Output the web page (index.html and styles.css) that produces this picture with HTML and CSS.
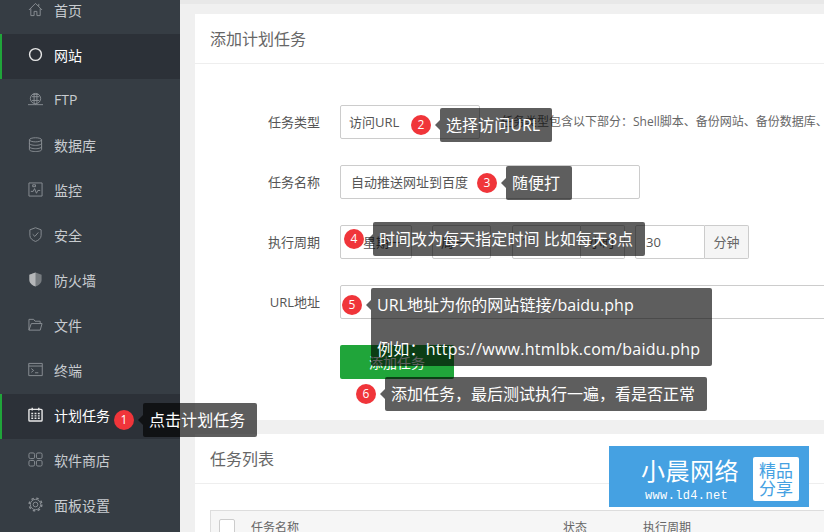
FILE: index.html
```html
<!DOCTYPE html>
<html lang="zh-CN">
<head>
    <meta charset="UTF-8">
    <meta name="viewport" content="width=device-width, initial-scale=1.0">
    <title>计划任务</title>
    <link rel="stylesheet" href="styles.css">
</head>
<body>
    <div class="page">
        <div class="sidebar">
            <ul class="menu">
                <li><svg viewBox="0 0 16 16"><path d="M1 8.500 8 1.500l7 7M3 7v7.500h3.500V10h3v4.500H13V7M11.500 2v2.500"/></svg>首页</li>
                <li class="active"><svg viewBox="0 0 16 16"><circle class="bold" cx="8" cy="8" r="6.300"/></svg>网站</li>
                <li><svg viewBox="0 0 16 16"><circle cx="8" cy="7" r="5.500"/><path d="M5 2.500h6M4 5h8M4 9h8M6.500 2v10M9.500 2v10M0 13.500h16M8 12.500v1"/></svg>FTP</li>
                <li><svg viewBox="0 0 16 16"><ellipse cx="8" cy="3" rx="6.500" ry="2.200"/><path d="M1.500 3v10.500c0 1.200 2.900 2 6.500 2s6.500-.8 6.500-2V3M1.500 6.700c0 1.200 2.900 2.200 6.500 2.200s6.500-1 6.500-2.200M1.500 10.300c0 1.200 2.900 2.200 6.500 2.200s6.500-1 6.500-2.200"/></svg>数据库</li>
                <li><svg viewBox="0 0 16 16"><path d="M1 1h14v14H1zM3 10h2.500l1.500-3 2 5 1.500-3H13M5 3h3v2H5z"/></svg>监控</li>
                <li><svg viewBox="0 0 16 16"><path d="M8 .8 14 3v6c0 3.200-3 5.400-6 6.400C5 14.400 2 12.200 2 9V3zM5 7.800 7.300 10 11 5.800"/></svg>安全</li>
                <li><svg viewBox="0 0 16 16"><path class="solid" d="M8 .5 14.500 3v5.500c0 3.300-3 5.700-6.500 7-3.500-1.300-6.500-3.700-6.500-7V3z"/><path class="shade" d="M8 .5v15c-3.500-1.300-6.500-3.700-6.500-7V3z"/></svg>防火墙</li>
                <li><svg viewBox="0 0 16 16"><path d="M1 14V2.500h5l1.500 2H13V7M1 14h12l2-7H3.500z"/></svg>文件</li>
                <li><svg viewBox="0 0 16 16"><path d="M.8 1.500h14.400v13H.8zM.8 4.300h14.400M3.500 7 6 9l-2.500 2M7.500 11.500H11"/></svg>终端</li>
                <li class="active"><svg viewBox="0 0 16 16"><path class="bold" d="M2 2.500h12a1 1 0 0 1 1 1V14a1 1 0 0 1-1 1H2a1 1 0 0 1-1-1V3.500a1 1 0 0 1 1-1zM4.500.8v3M11.500.8v3"/><path class="bold" d="M3.500 7h2M7 7h2M10.500 7h2M3.500 9.500h2M7 9.500h2M10.500 9.500h2M3.500 12h2M7 12h2M10.500 12h2"/></svg>计划任务</li>
                <li><svg viewBox="0 0 16 16"><rect x="1" y="1" width="6" height="6" rx="1.500"/><rect x="9" y="1" width="6" height="6" rx="1.500"/><rect x="1" y="9" width="6" height="6" rx="1.500"/><rect x="9" y="9" width="6" height="6" rx="1.500"/></svg>软件商店</li>
                <li><svg viewBox="0 0 16 16"><circle cx="8" cy="8" r="2.500"/><circle cx="8" cy="8" r="5.500"/><circle class="teeth" cx="8" cy="8" r="6.800"/></svg>面板设置</li>
            </ul>
        </div>

        <div class="main">
            <div class="card">
                <div class="card-title">添加计划任务</div>
                <div class="form">
                    <div class="row">
                        <label>任务类型</label>
                        <div class="box type-box">访问URL</div>
                        <span class="helper">任务类型包含以下部分：Shell脚本、备份网站、备份数据库、日志切割</span>
                    </div>
                    <div class="row">
                        <label>任务名称</label>
                        <div class="box name-box">自动推送网址到百度</div>
                    </div>
                    <div class="row">
                        <label>执行周期</label>
                        <div class="box week-box">星期一</div>
                        <div class="box day-box">周一</div>
                        <div class="group">
                            <div class="box hour-box">1</div>
                            <div class="box unit-box">小时</div>
                        </div>
                        <div class="group">
                            <div class="box min-box">30</div>
                            <div class="box addon">分钟</div>
                        </div>
                    </div>
                    <div class="row">
                        <label>URL地址</label>
                        <div class="box url-box"></div>
                    </div>
                    <div class="row">
                        <label></label>
                        <button class="btn">添加任务</button>
                    </div>
                </div>
            </div>

            <div class="card">
                <div class="card-title">任务列表</div>
                <div class="table-wrap">
                    <div class="table-head">
                        <span class="check"></span>
                        <span class="col-name">任务名称</span>
                        <span class="col-state">状态</span>
                        <span>执行周期</span>
                    </div>
                </div>
            </div>
        </div>
    </div>

    <!-- 教程标注 -->
    <div class="mark mark-1"><span class="num">1</span><div class="tip">点击计划任务</div></div>
    <div class="mark mark-2"><span class="num">2</span><div class="tip">选择访问URL</div></div>
    <div class="mark mark-3"><span class="num">3</span><div class="tip">随便打</div></div>
    <div class="mark mark-4"><span class="num">4</span><div class="tip">时间改为每天指定时间 比如每天8点</div></div>
    <div class="mark mark-5"><span class="num">5</span><div class="tip">URL地址为你的网站链接/baidu.php<br><br><span class="wide">例如：https://www.htmlbk.com/baidu.php</span></div></div>
    <div class="mark mark-6"><span class="num">6</span><div class="tip">添加任务，最后测试执行一遍，看是否正常</div></div>

    <div class="stamp">
        <div class="stamp-text">
            <div class="stamp-name">小晨网络</div>
            <div class="stamp-url">www.ld4.net</div>
        </div>
        <div class="stamp-tag">精品<br>分享</div>
    </div>
</body>
</html>
```

FILE: styles.css
```css
* {
    box-sizing: border-box;
}

html, body {
    height: 100%;
}

body {
    margin: 0;
    overflow: hidden;
    position: relative;
    font-family: "Open Sans", "Noto Sans CJK SC", sans-serif;
    background-color: #f0f0f0;
    color: #555;
}

.page {
    display: flex;
    height: 532px;
    overflow: hidden;
}

.sidebar {
    width: 180px;
    flex-shrink: 0;
    background: #363d44;
    overflow: hidden;
}

.menu {
    list-style: none;
    margin: -11px 0 0;
    padding: 0;
}

.menu li {
    display: flex;
    align-items: center;
    height: 45px;
    padding: 0 0 4px 26px;
    border-left: 2px solid transparent;
    font-size: 14px;
    color: #c8ccd0;
}

.menu li svg {
    width: 15px;
    height: 15px;
    margin-right: 11px;
    flex-shrink: 0;
    fill: none;
    stroke: #8b9095;
    stroke-width: 1;
}

.menu li.active {
    background: #2c3138;
    border-left: 2px solid #20a53a;
    color: #fff;
}

.menu li.active svg {
    stroke: #e8e8e8;
}

.menu li svg .bold {
    stroke-width: 1.500;
}

.menu li svg .solid {
    fill: #777c80;
    stroke: none;
}

.menu li svg .shade {
    fill: #b5b7b9;
    stroke: none;
}

.menu li svg .teeth {
    stroke-width: 1.500;
    stroke-dasharray: 2.670 2.670;
}

.main {
    flex: 1;
    min-width: 0;
    padding: 14px 0 0 15px;
    background: linear-gradient(#e8e8e8 4px, #f0f0f0 4px);
}

.card {
    width: 900px;
    background: #fff;
    margin-bottom: 14px;
}

.card-title {
    height: 50px;
    line-height: 50px;
    padding-left: 15px;
    border-bottom: 1px solid #eee;
    font-size: 16px;
    color: #666;
}

.form {
    padding: 41px 0 41px;
}

.row {
    display: flex;
    align-items: center;
    height: 34px;
    margin-bottom: 26px;
}

.row:last-child {
    margin-bottom: 0;
}

.row label {
    width: 125px;
    margin-right: 20px;
    padding-bottom: 2px;
    text-align: right;
    font-size: 13px;
    color: #555;
}

.box {
    height: 34px;
    line-height: 32px;
    padding-left: 8px;
    border: 1px solid #ccc;
    border-radius: 2px;
    background: #fff;
    font-size: 13px;
    color: #555;
}

.type-box {
    width: 140px;
}

.helper {
    margin-left: 21px;
    padding-bottom: 2px;
    font-size: 12px;
    color: #666;
    white-space: nowrap;
}

.name-box {
    width: 300px;
    padding-left: 10px;
}

.week-box {
    width: 72px;
    padding-left: 22px;
}

.day-box {
    width: 59px;
    margin-left: 20px;
}

.group {
    display: flex;
}

.hour-box {
    width: 69px;
    margin-left: 21px;
    border-radius: 2px 0 0 2px;
}

.unit-box {
    width: 44px;
    border-left: 0;
    border-radius: 0 2px 2px 0;
}

.min-box {
    width: 70px;
    margin-left: 10px;
    padding-left: 10px;
    border-radius: 2px 0 0 2px;
}

.addon {
    width: 44px;
    padding: 0;
    border-left: 0;
    border-radius: 0 2px 2px 0;
    background: #f5f5f5;
    text-align: center;
    color: #666;
}

.url-box {
    width: 520px;
}

.btn {
    width: 114px;
    height: 34px;
    border: 0;
    border-radius: 2px;
    background: #20a53a;
    font-family: inherit;
    font-size: 14px;
    color: #fff;
}

.table-wrap {
    padding: 26px 0 0 15px;
}

.table-head {
    display: flex;
    align-items: flex-start;
    height: 40px;
    padding: 7px 0 0 8px;
    border: 1px solid #ddd;
    background: #f6f6f6;
    font-size: 12px;
    color: #666;
}

.check {
    width: 16px;
    height: 16px;
    margin: 1px 16px 0 0;
    border: 1px solid #ccc;
    border-radius: 2px;
    background: #fff;
}

.col-name {
    width: 312px;
}

.col-state {
    width: 80px;
}

/* 标注层 */
.mark {
    position: absolute;
    display: flex;
    align-items: flex-start;
}

.mark-1 { left: 114px; top: 403px; }
.mark-2 { left: 411px; top: 108px; }
.mark-3 { left: 477px; top: 166px; }
.mark-4 { left: 344px; top: 222px; }
.mark-5 { left: 342px; top: 288px; }
.mark-6 { left: 356px; top: 377px; }

.num {
    width: 20px;
    height: 20px;
    margin-top: 7px;
    margin-right: 9px;
    border-radius: 50%;
    background: #f0353a;
    color: #fff;
    font-size: 12px;
    line-height: 20px;
    text-align: center;
}

.tip {
    position: relative;
    padding: 6px 12px 6px 6px;
    border-radius: 2px;
    background: rgba(0, 0, 0, 0.63);
    color: #fff;
    font-size: 16px;
    line-height: 22px;
    letter-spacing: 0.050px;
    white-space: nowrap;
}

.mark-6 .tip {
    letter-spacing: 0;
}

.tip .wide {
    letter-spacing: 0.250px;
}

.tip::before {
    content: "";
    position: absolute;
    left: -5px;
    top: 12px;
    border-style: solid;
    border-width: 5px 5px 5px 0;
    border-color: transparent rgba(0, 0, 0, 0.63) transparent transparent;
}

.stamp {
    position: absolute;
    left: 609px;
    top: 446px;
    display: flex;
    align-items: center;
    width: 200px;
    height: 61px;
    padding-left: 32px;
    background: #45a1e2;
    color: #fff;
}

.stamp-text {
    width: 112px;
    padding-top: 5px;
}

.stamp-name {
    font-size: 24px;
    line-height: 32px;
    letter-spacing: 0.500px;
    white-space: nowrap;
}

.stamp-url {
    margin-top: 1px;
    padding-left: 4px;
    font-family: "Liberation Mono", monospace;
    font-size: 12px;
    line-height: 16px;
    letter-spacing: 0.350px;
    white-space: nowrap;
}

.stamp-tag {
    width: 46px;
    height: 44px;
    margin-top: 5px;
    padding-top: 5px;
    border-radius: 2px;
    background: #fff;
    color: #45a1e2;
    font-size: 17px;
    line-height: 18px;
    text-align: center;
}
```
